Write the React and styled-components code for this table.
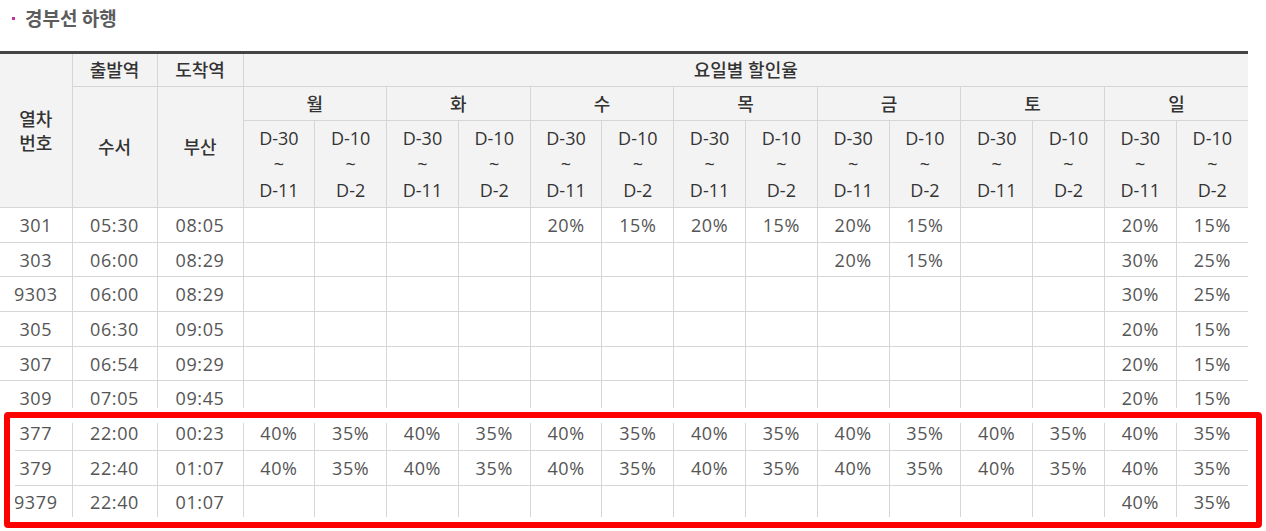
import React from "react";
import styled, { createGlobalStyle } from "styled-components";

const GlobalStyle = createGlobalStyle`
  body {
    margin: 0;
    background: #ffffff;
    font-family: "Open Sans", "Noto Sans CJK KR", sans-serif;
  }
`;

const days = ["월", "화", "수", "목", "금", "토", "일"];

// each rate row: 14 values (D-30~D-11, D-10~D-2 for 월..일)
const e = ["", ""];
const r = (a, b) => [a, b];
const all = Array.from({ length: 14 }, (_, i) => (i % 2 ? "35%" : "40%"));

const rows = [
  { no: "301", dep: "05:30", arr: "08:05", rates: [...e, ...e, ...r("20%", "15%"), ...r("20%", "15%"), ...r("20%", "15%"), ...e, ...r("20%", "15%")] },
  { no: "303", dep: "06:00", arr: "08:29", rates: [...e, ...e, ...e, ...e, ...r("20%", "15%"), ...e, ...r("30%", "25%")] },
  { no: "9303", dep: "06:00", arr: "08:29", rates: [...e, ...e, ...e, ...e, ...e, ...e, ...r("30%", "25%")] },
  { no: "305", dep: "06:30", arr: "09:05", rates: [...e, ...e, ...e, ...e, ...e, ...e, ...r("20%", "15%")] },
  { no: "307", dep: "06:54", arr: "09:29", rates: [...e, ...e, ...e, ...e, ...e, ...e, ...r("20%", "15%")] },
  { no: "309", dep: "07:05", arr: "09:45", rates: [...e, ...e, ...e, ...e, ...e, ...e, ...r("20%", "15%")] },
  { no: "377", dep: "22:00", arr: "00:23", rates: all },
  { no: "379", dep: "22:40", arr: "01:07", rates: all },
  { no: "9379", dep: "22:40", arr: "01:07", rates: [...e, ...e, ...e, ...e, ...e, ...e, ...r("40%", "35%")] },
];

const App = () => {
  return (
    <React.Fragment>
      <GlobalStyle />
      <Page>
        <Title>경부선 하행</Title>
        <TableWrap>
          <Table>
            <colgroup>
              <col style={{ width: 72 }} />
              <col style={{ width: 85 }} />
              <col style={{ width: 86 }} />
              {Array.from({ length: 14 }).map((_, i) => (
                <col key={i} />
              ))}
            </colgroup>
            <thead>
              <tr>
                <Th rowSpan={3} $first>
                  열차
                  <br />
                  번호
                </Th>
                <Th $h={33}>출발역</Th>
                <Th>도착역</Th>
                <Th colSpan={14}>요일별 할인율</Th>
              </tr>
              <tr>
                <Th rowSpan={2}>수서</Th>
                <Th rowSpan={2}>부산</Th>
                {days.map((d) => (
                  <Th key={d} colSpan={2} $h={34}>
                    {d}
                  </Th>
                ))}
              </tr>
              <tr>
                {days.map((d) => (
                  <React.Fragment key={d}>
                    <Th $range $h={87}>
                      D-30
                      <br />
                      ~
                      <br />
                      D-11
                    </Th>
                    <Th $range>
                      D-10
                      <br />
                      ~
                      <br />
                      D-2
                    </Th>
                  </React.Fragment>
                ))}
              </tr>
            </thead>
            <tbody>
              {rows.map((row) => (
                <tr key={row.no}>
                  <Td $first>{row.no}</Td>
                  <Td>{row.dep}</Td>
                  <Td>{row.arr}</Td>
                  {row.rates.map((v, i) => (
                    <Td key={i}>{v}</Td>
                  ))}
                </tr>
              ))}
            </tbody>
          </Table>
          <Highlight />
        </TableWrap>
      </Page>
    </React.Fragment>
  );
};

export default App;

const Page = styled.div`
  width: 1248px;
  min-height: 531px;
  padding-top: 6px;
  box-sizing: border-box;
`;

const Title = styled.h3`
  margin: 0 0 21px 0;
  padding-left: 25px;
  position: relative;
  font-size: 19px;
  line-height: 24px;
  font-weight: 700;
  color: #5c5c5c;
  font-family: "Noto Sans CJK KR", sans-serif;

  &::before {
    content: "";
    position: absolute;
    left: 12px;
    top: 11px;
    width: 3px;
    height: 3px;
    background-color: #c4359b;
  }
`;

const TableWrap = styled.div`
  position: relative;
`;

const Table = styled.table`
  width: 1248px;
  table-layout: fixed;
  border-collapse: collapse;
  border-top: 3px solid #444444;
`;

const Th = styled.th`
  background-color: #f3f3f3;
  border: 1px solid #d6d6d6;
  border-left: ${(p) => (p.$first ? "none" : "1px solid #d6d6d6")};
  border-right: 1px solid #d6d6d6;
  height: ${(p) => (p.$h ? `${p.$h - 1}px` : "auto")};
  padding: 0;
  font-size: 18px;
  font-weight: ${(p) => (p.$range ? 400 : 500)};
  color: #333333;
  line-height: ${(p) => (p.$range ? "26px" : "24px")};
  text-align: center;
  vertical-align: middle;
  font-family: "Open Sans", "Noto Sans CJK KR", sans-serif;

  &:last-child {
    border-right: none;
  }
`;

const Td = styled.td`
  border-bottom: 1px solid #d6d6d6;
  border-left: ${(p) => (p.$first ? "none" : "1px solid #d6d6d6")};
  height: 33.7px;
  padding: 0;
  font-size: 18px;
  letter-spacing: 0.6px;
  color: #555555;
  text-align: center;
  vertical-align: middle;
  line-height: 24px;
`;

const Highlight = styled.div`
  position: absolute;
  left: 4px;
  top: 361px;
  width: 1258px;
  height: 116px;
  box-sizing: border-box;
  border: 6px solid #ff0000;
  border-radius: 4px;
  box-shadow: 0 0 0 4px #ffffff, inset 0 0 0 5px #ffffff;
  pointer-events: none;
`;
